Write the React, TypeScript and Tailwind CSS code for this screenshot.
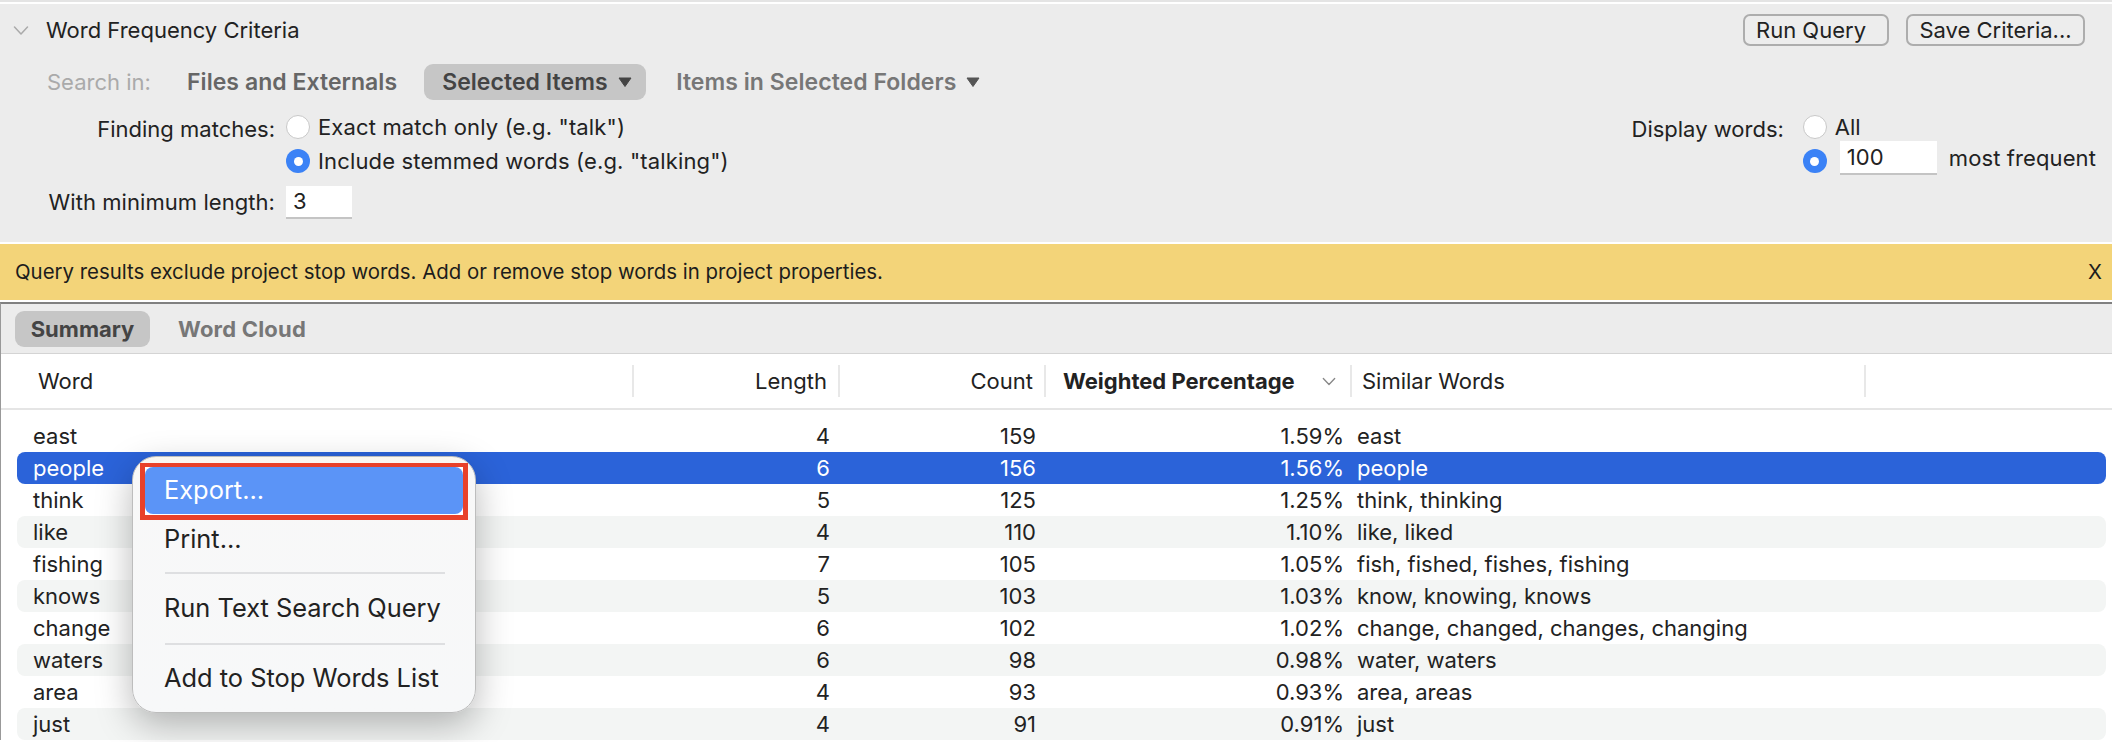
const rows = [
  ['east', 4, 159, '1.59%', 'east'],
  ['people', 6, 156, '1.56%', 'people'],
  ['think', 5, 125, '1.25%', 'think, thinking'],
  ['like', 4, 110, '1.10%', 'like, liked'],
  ['fishing', 7, 105, '1.05%', 'fish, fished, fishes, fishing'],
  ['knows', 5, 103, '1.03%', 'know, knowing, knows'],
  ['change', 6, 102, '1.02%', 'change, changed, changes, changing'],
  ['waters', 6, 98, '0.98%', 'water, waters'],
  ['area', 4, 93, '0.93%', 'area, areas'],
  ['just', 4, 91, '0.91%', 'just'],
];

const Chevron = ({ className }: { className: string }) => (
  <svg viewBox="0 0 16 10" fill="none" className={className}>
    <path d="M1.5 1.5 8 8.5l6.5-7" stroke="currentColor" strokeWidth="1.5" strokeLinecap="round" strokeLinejoin="round" />
  </svg>
);

const Caret = ({ className }: { className: string }) => (
  <svg viewBox="0 0 14 10" className={className}>
    <path d="M1 1h12L7 9.5z" fill="currentColor" stroke="currentColor" strokeWidth="1" strokeLinejoin="round" />
  </svg>
);

const Radio = ({ on }: { on?: boolean }) =>
  on ? (
    <span className="flex h-6 w-6 shrink-0 items-center justify-center rounded-full bg-[#3b82f6]">
      <span className="h-[9px] w-[9px] rounded-full bg-white" />
    </span>
  ) : (
    <span className="h-6 w-6 shrink-0 rounded-full border border-[#c8c8c8] bg-white" />
  );

export default function App() {
  return (
    <div className="relative h-[742px] w-[2112px] overflow-hidden bg-white text-[22px] text-[#222] font-['Inter',sans-serif]">
      <div className="h-[4px] border-t-2 border-[#e4e4e4] bg-white" />

      <section className="h-[238px] bg-[#ececec] pl-[13px] pr-[16px] pt-[10px]">
        <div className="flex h-8 items-center justify-between pr-[11px]">
          <div className="flex items-center">
            <Chevron className="h-[11px] w-[16px] text-[#aaa]" />
            <span className="ml-[17px]">Word Frequency Criteria</span>
          </div>
          <div className="flex gap-[17px]">
            <button className="h-8 w-[146px] rounded-[7px] border-2 border-[#adadad] bg-[#ededed] pr-[10px] text-center leading-[26px]">Run Query</button>
            <button className="h-8 w-[179px] rounded-[7px] border-2 border-[#adadad] bg-[#ededed] text-center leading-[26px]">Save Criteria...</button>
          </div>
        </div>

        <div className="mt-[18px] flex h-9 items-center pl-[34px]">
          <span className="w-[140px] text-[#aaa]">Search in:</span>
          <span className="text-[23px] font-semibold tracking-[0.05px] text-[#666]">Files and Externals</span>
          <span className="ml-[27px] flex h-9 w-[222px] items-center rounded-[9px] bg-[#c6c6c6] pl-[18px] text-[23px] font-semibold tracking-[0.05px] text-[#444]">
            Selected Items
            <Caret className="ml-[10px] h-[10px] w-[14px] text-[#444]" />
          </span>
          <span className="ml-[30px] flex items-center text-[23px] font-semibold tracking-[0.05px] text-[#777]">
            Items in Selected Folders
            <Caret className="ml-[10px] h-[10px] w-[14px] text-[#555]" />
          </span>
        </div>

        <div className="mt-[10px] flex items-start justify-between">
          <div className="grid grid-cols-[273px_1fr]">
            <span className="flex h-[34px] items-center justify-end pr-[11px] pt-[5px]">Finding matches:</span>
            <div className="flex h-[34px] items-center gap-2 tracking-[0.15px]">
              <Radio />
              <span>Exact match only (e.g. "talk")</span>
            </div>
            <span />
            <div className="flex h-[34px] items-center gap-2 tracking-[0.15px]">
              <Radio on />
              <span>Include stemmed words (e.g. "talking")</span>
            </div>
            <span className="mt-[8px] flex h-[33px] items-center justify-end pr-[11px] tracking-[0.06px]">With minimum length:</span>
            <span className="mt-[8px] flex h-[33px] w-[66px] items-center border-b-2 border-[#c4c4c4] bg-white pl-[7px]">3</span>
          </div>

          <div className="grid grid-cols-[auto_1fr]">
            <span className="flex h-[34px] items-center pr-[19px] pt-[5px]">Display words:</span>
            <div className="flex h-[34px] items-center gap-2">
              <Radio />
              <span>All</span>
            </div>
            <span />
            <div className="flex h-[34px] items-center">
              <Radio on />
              <span className="mb-[6px] ml-[13px] flex h-[34px] w-[97px] items-center border-b-2 border-[#c4c4c4] bg-white pl-[7px]">100</span>
              <span className="mb-[6px] ml-3 tracking-[0.1px]">most frequent</span>
            </div>
          </div>
        </div>
      </section>

      <div className="h-[2px] bg-white" />
      <div className="flex h-[56px] items-center justify-between bg-[#f3d479] pl-[15px] pr-[10px] text-[20.4px] text-[#1c1c1c]">
        <span>Query results exclude project stop words. Add or remove stop words in project properties.</span>
        <span>X</span>
      </div>
      <div className="h-[2px] bg-white" />

      <section className="border-l border-t-2 border-l-[#999] border-t-[#808080]">
        <div className="flex h-[50px] items-center gap-7 border-b border-[#d4d4d4] bg-[#ececec] pl-[14px] pt-[1px] font-bold">
          <span className="flex h-9 w-[135px] items-center justify-center rounded-[9px] bg-[#c6c6c6] text-[#444]">Summary</span>
          <span className="tracking-[0.2px] text-[#777]">Word Cloud</span>
        </div>

        <div className="grid h-[56px] grid-cols-[631px_206px_206px_306px_514px_1fr] items-center border-b-2 border-[#e5e5e5]">
          <span className="flex h-8 items-center pl-[37px]">Word</span>
          <span className="flex h-8 items-center justify-end border-l-2 border-[#e8e8e8] pr-[11px]">Length</span>
          <span className="flex h-8 items-center justify-end border-l-2 border-[#e8e8e8] pr-[11px]">Count</span>
          <span className="flex h-8 items-center justify-between border-l-2 border-[#e8e8e8] pl-[17px] pr-[14px] font-bold">
            Weighted Percentage
            <Chevron className="h-[9px] w-[14px] text-[#888]" />
          </span>
          <span className="flex h-8 items-center border-l-2 border-[#e8e8e8] pl-[10px]">Similar Words</span>
          <span className="h-8 border-l-2 border-[#e8e8e8]" />
        </div>

        <div className="pl-4 pr-[6px] pt-[10px]">
          {rows.map((r, i) => (
            <div
              key={r[0]}
              className={
                'grid h-8 grid-cols-[615px_198px_206px_308px_1fr] items-center rounded-[8px] ' +
                (i === 1 ? 'bg-[#2b63d9] text-white' : i % 2 === 1 ? 'bg-[#f3f5f4]' : '')
              }
            >
              <span className="pl-4">{r[0]}</span>
              <span className="text-right">{r[1]}</span>
              <span className="text-right">{r[2]}</span>
              <span className="text-right">{r[3]}</span>
              <span className="pl-[13px]">{r[4]}</span>
            </div>
          ))}
        </div>
      </section>

      <div className="absolute left-[132px] top-[456px] h-[257px] w-[344px] rounded-[24px] border border-[#bdbdbd] bg-gradient-to-b from-[#faf6ef] via-[#f8f8f8] via-[6%] to-[#f7f8f9] text-[25.4px] text-[#222] shadow-[0_12px_36px_rgba(0,0,0,0.28)]">
        <div className="mx-[7px] mt-[6px] h-[57px] border-x-[5px] border-b-[5px] border-t-4 border-[#e8412a] bg-white pb-[1px]">
          <div className="flex h-full items-center rounded-[8px] bg-[#5b94f7] pl-[19px] text-white">Export...</div>
        </div>
        <div className="pl-[31px]">
          <div className="flex h-[38px] items-center">Print...</div>
          <div className="ml-[1px] mt-[14px] w-[280px] border-t-2 border-[#dedfe1]" />
          <div className="flex h-[69px] items-center">Run Text Search Query</div>
          <div className="ml-[1px] w-[280px] border-t-2 border-[#dedfe1]" />
          <div className="flex h-[66px] items-center">Add to Stop Words List</div>
        </div>
      </div>
    </div>
  );
}
